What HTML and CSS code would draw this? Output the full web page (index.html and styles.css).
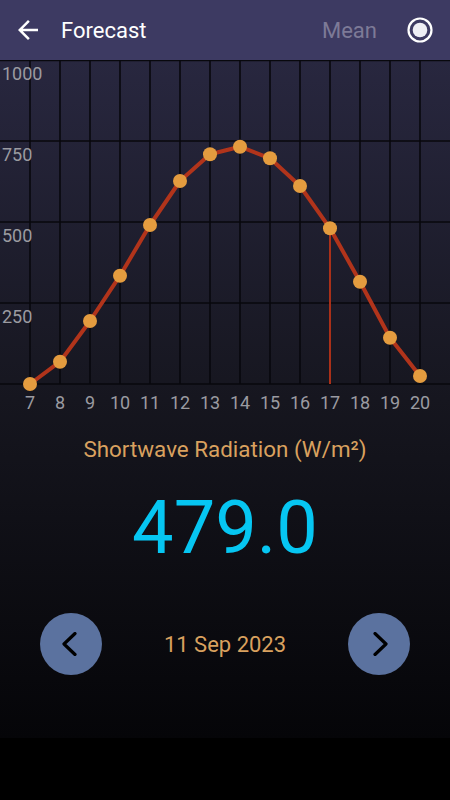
FILE: index.html
```html
<!doctype html>
<html>

<head>
	<meta charset="UTF-8">
	<title>Forecast</title>
	<link rel="stylesheet" href="styles.css">
</head>

<body>
	<div class="app">
		<div class="toolbar">
			<svg class="back" width="30" height="30" viewBox="0 0 24 24">
				<path d="M20 11H7.83l5.59-5.59L12 4l-8 8 8 8 1.41-1.41L7.83 13H20v-2z" fill="#fff" />
			</svg>
			<span class="title">Forecast</span>
			<span class="mean">Mean</span>
			<svg class="radio" width="28" height="28" viewBox="0 0 28 28">
				<circle cx="14" cy="14" r="11.5" fill="none" stroke="#fff" stroke-width="2.2" />
				<circle cx="14" cy="14" r="7.3" fill="#eeeef4" />
			</svg>
		</div>

		<div class="main">
			<!-- chart: 250 W/m2 = 81px, one hour = 30px -->
			<svg class="chart" width="450" height="360" viewBox="0 0 450 360">
				<g class="grid">
					<line x1="0" y1="0.5" x2="450" y2="0.5" />
					<line x1="0" y1="81" x2="450" y2="81" />
					<line x1="0" y1="162" x2="450" y2="162" />
					<line x1="0" y1="243" x2="450" y2="243" />
					<line x1="0" y1="324" x2="450" y2="324" />
					<line x1="30" y1="0" x2="30" y2="324" />
					<line x1="60" y1="0" x2="60" y2="324" />
					<line x1="90" y1="0" x2="90" y2="324" />
					<line x1="120" y1="0" x2="120" y2="324" />
					<line x1="150" y1="0" x2="150" y2="324" />
					<line x1="180" y1="0" x2="180" y2="324" />
					<line x1="210" y1="0" x2="210" y2="324" />
					<line x1="240" y1="0" x2="240" y2="324" />
					<line x1="270" y1="0" x2="270" y2="324" />
					<line x1="300" y1="0" x2="300" y2="324" />
					<line x1="330" y1="0" x2="330" y2="324" />
					<line x1="360" y1="0" x2="360" y2="324" />
					<line x1="390" y1="0" x2="390" y2="324" />
					<line x1="420" y1="0" x2="420" y2="324" />
				</g>
				<g class="ylabels">
					<text x="2" y="20">1000</text>
					<text x="2" y="101">750</text>
					<text x="2" y="182">500</text>
					<text x="2" y="263">250</text>
				</g>
				<g class="xlabels">
					<text x="30" y="349">7</text>
					<text x="60" y="349">8</text>
					<text x="90" y="349">9</text>
					<text x="120" y="349">10</text>
					<text x="150" y="349">11</text>
					<text x="180" y="349">12</text>
					<text x="210" y="349">13</text>
					<text x="240" y="349">14</text>
					<text x="270" y="349">15</text>
					<text x="300" y="349">16</text>
					<text x="330" y="349">17</text>
					<text x="360" y="349">18</text>
					<text x="390" y="349">19</text>
					<text x="420" y="349">20</text>
				</g>
				<line class="marker" x1="330" y1="168" x2="330" y2="324" />
				<polyline class="curve" points="30,324 60,301.7 90,261 120,215.7 150,165 180,121 210,94.3 240,86.7 270,98.3 300,126 330,168.3 360,221.7 390,277.7 420,316" />
				<g class="dots">
					<circle cx="30" cy="324" r="7" />
					<circle cx="60" cy="301.7" r="7" />
					<circle cx="90" cy="261" r="7" />
					<circle cx="120" cy="215.7" r="7" />
					<circle cx="150" cy="165" r="7" />
					<circle cx="180" cy="121" r="7" />
					<circle cx="210" cy="94.3" r="7" />
					<circle cx="240" cy="86.7" r="7" />
					<circle cx="270" cy="98.3" r="7" />
					<circle cx="300" cy="126" r="7" />
					<circle cx="330" cy="168.3" r="7" />
					<circle cx="360" cy="221.7" r="7" />
					<circle cx="390" cy="277.7" r="7" />
					<circle cx="420" cy="316" r="7" />
				</g>
			</svg>

			<div class="label">Shortwave Radiation (W/m²)</div>
			<div class="value">479.0</div>

			<div class="nav">
				<div class="round_btn">
					<svg width="24" height="24" viewBox="0 0 24 24">
						<polyline points="16,1.5 5,12 16,22.5" fill="none" stroke="#000" stroke-width="3.2" stroke-linecap="round" stroke-linejoin="round" />
					</svg>
				</div>
				<div class="date">11 Sep 2023</div>
				<div class="round_btn">
					<svg width="24" height="24" viewBox="0 0 24 24">
						<polyline points="8,1.5 19,12 8,22.5" fill="none" stroke="#000" stroke-width="3.2" stroke-linecap="round" stroke-linejoin="round" />
					</svg>
				</div>
			</div>
		</div>

		<div class="bottom"></div>
	</div>
</body>

</html>
```

FILE: styles.css
```css
body {
	margin: 0;
	background: #000;
	font-family: Roboto, "Liberation Sans", sans-serif;
}

.app {
	width: 450px;
	height: 800px;
	display: flex;
	flex-direction: column;
}

/* top bar */
.toolbar {
	height: 60px;
	flex-shrink: 0;
	background: #3d3a62;
	display: flex;
	align-items: center;
	padding: 0 16px 0 13px;
}

.back {
	display: block;
}

.title {
	color: #fff;
	font-size: 22px;
	margin-left: 18px;
	flex: 1;
}

.mean {
	color: #7d7a97;
	font-size: 22px;
	margin-right: 29px;
}

.radio {
	display: block;
}

/* gradient part with chart and reading */
.main {
	height: 678px;
	background: linear-gradient(#28273f, #16161f 50%, #050508);
	display: flex;
	flex-direction: column;
	align-items: center;
}

.chart {
	display: block;
}

.grid line {
	stroke: #08080d;
	stroke-width: 1.6;
}

.ylabels text,
.xlabels text {
	fill: #9b9ba1;
	font-size: 18px;
	font-family: Roboto, "Liberation Sans", sans-serif;
}

.xlabels text {
	text-anchor: middle;
}

.marker {
	stroke: #a93019;
	stroke-width: 2;
}

.curve {
	fill: none;
	stroke: #b1341b;
	stroke-width: 4;
	stroke-linejoin: round;
}

.dots circle {
	fill: #e49c3f;
}

.label {
	margin-top: 16px;
	color: #d9a15f;
	font-size: 22.4px;
	line-height: 26px;
}

.value {
	margin-top: 29px;
	color: #06c6f2;
	font-size: 74px;
	line-height: 74px;
}

.nav {
	margin-top: 48px;
	width: 370px;
	display: flex;
	align-items: center;
	justify-content: space-between;
}

.round_btn {
	width: 62px;
	height: 62px;
	border-radius: 50%;
	background: #5b729f;
	display: flex;
	align-items: center;
	justify-content: center;
}

.date {
	color: #d9a15f;
	font-size: 22px;
}

.bottom {
	height: 62px;
	background: #000;
}
```
